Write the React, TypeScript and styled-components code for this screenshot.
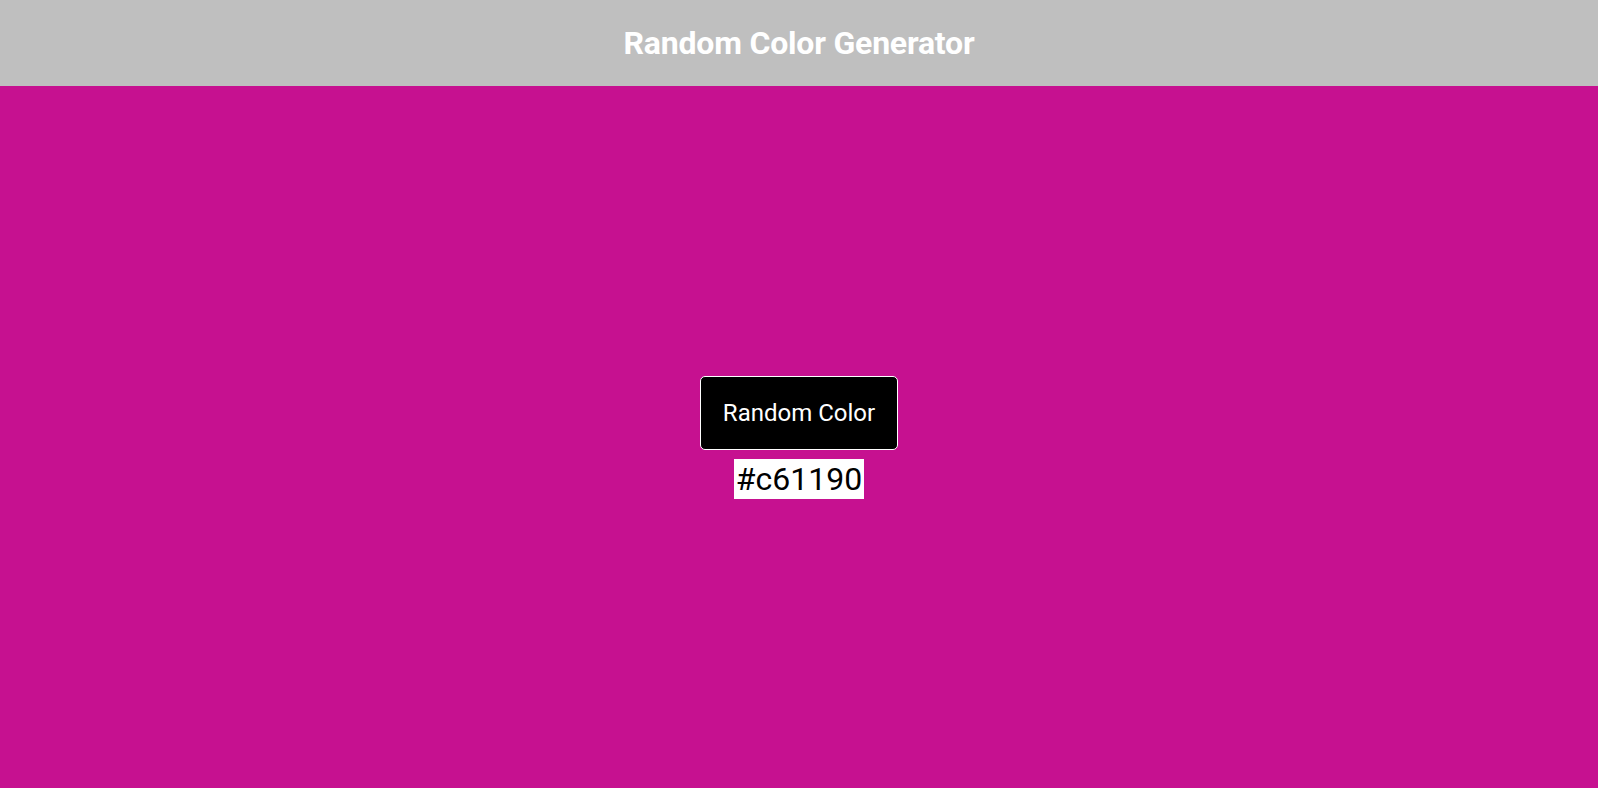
import styled, { createGlobalStyle } from "styled-components";
import { useState } from "react";

const GlobalStyle = createGlobalStyle`
    html, body {
        margin: 0;
        padding: 0;
        height: 100%;
        font-family: Roboto, "Liberation Sans", sans-serif;
    }
    #root {
        height: 100%;
    }
`

const randomHex = () =>
    "#" + Math.floor(Math.random() * 0xffffff).toString(16).padStart(6, "0");

export default function App() {
    const [color, setColor] = useState("#c61190");

    return (
        <>
            <GlobalStyle/>
            <Page>
                <Header>
                    <Title>Random Color Generator</Title>
                </Header>
                <Main $bg={color}>
                    <ColorButton onClick={() => setColor(randomHex())}>Random Color</ColorButton>
                    <HexLabel>{color}</HexLabel>
                </Main>
            </Page>
        </>
    );
}

const Page = styled.div`
    display: flex;
    flex-direction: column;
    height: 100vh;
`

const Header = styled.header`
    height: 86px;
    flex-shrink: 0;
    display: flex;
    align-items: center;
    justify-content: center;
    background: #bfbfbf;
`

const Title = styled.h1`
    margin: 0;
    color: #fff;
    font-size: 32px;
    font-weight: 700;
    letter-spacing: -0.2px;
`

const Main = styled.main<{ $bg: string }>`
    flex: 1;
    display: flex;
    flex-direction: column;
    align-items: center;
    justify-content: center;
    gap: 9px;
    background: ${({ $bg }) => $bg};
`

const ColorButton = styled.button`
    width: 198px;
    height: 74px;
    background: #000;
    color: #fff;
    border: 1px solid #fff;
    border-radius: 5px;
    font-family: Roboto, "Liberation Sans", sans-serif;
    font-size: 24px;
    cursor: pointer;
`

const HexLabel = styled.span`
    background: #fff;
    color: #000;
    font-size: 32px;
    line-height: 40px;
    padding: 0 2px;
`
